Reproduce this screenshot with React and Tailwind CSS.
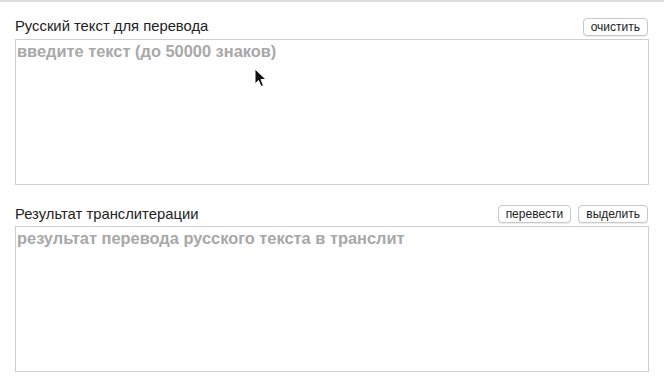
import React from 'react';

function Btn({ children }) {
    return (
        <button className="h-[18px] px-[7px] border border-[#c8c8c8] rounded-[4px] bg-white text-[12px] leading-none text-[#222] shadow-[0_1px_1px_rgba(0,0,0,0.08)]">
            {children}
        </button>
    );
}

function Cursor() {
    return (
        <svg className="absolute left-[254px] top-[66px]" width="14" height="20" viewBox="0 0 14 20">
            <path d="M1 1 L1 16 L4.5 12.5 L7 18.5 L9.5 17.5 L7 11.5 L12 11.5 Z" fill="#111" stroke="#fff" strokeWidth="1" />
        </svg>
    );
}

export default function App() {
    return (
        <div className="relative w-[664px] h-[391px] bg-white border-t-2 border-[#dcdcdc] font-['Liberation_Sans',Arial,sans-serif]">
            <div className="px-[15px]">
                <div className="flex items-end justify-between h-[37px] pb-[3px]">
                    <span className="text-[14.8px] text-[#222] leading-none pb-[2px]">Русский текст для перевода</span>
                    <div className="flex gap-[7px] pr-[1px]">
                        <Btn>очистить</Btn>
                    </div>
                </div>
                <textarea
                    className="block w-[634px] h-[146px] border border-[#cfcfcf] resize-none px-[1px] py-[1px] text-[16.4px] font-bold leading-[20px] outline-none placeholder:text-[#a8a8a8]"
                    placeholder="введите текст (до 50000 знаков)"
                />
                <div className="flex items-end justify-between h-[41px] pb-[3px]">
                    <span className="text-[14.8px] text-[#222] leading-none pb-[1px]">Результат транслитерации</span>
                    <div className="flex gap-[7px] pr-[1px]">
                        <Btn>перевести</Btn>
                        <Btn>выделить</Btn>
                    </div>
                </div>
                <textarea
                    className="block w-[634px] h-[146px] border border-[#cfcfcf] resize-none px-[1px] py-[1px] text-[16.4px] font-bold leading-[20px] outline-none placeholder:text-[#a8a8a8]"
                    placeholder="результат перевода русского текста в транслит"
                />
            </div>
            <Cursor />
        </div>
    );
}
